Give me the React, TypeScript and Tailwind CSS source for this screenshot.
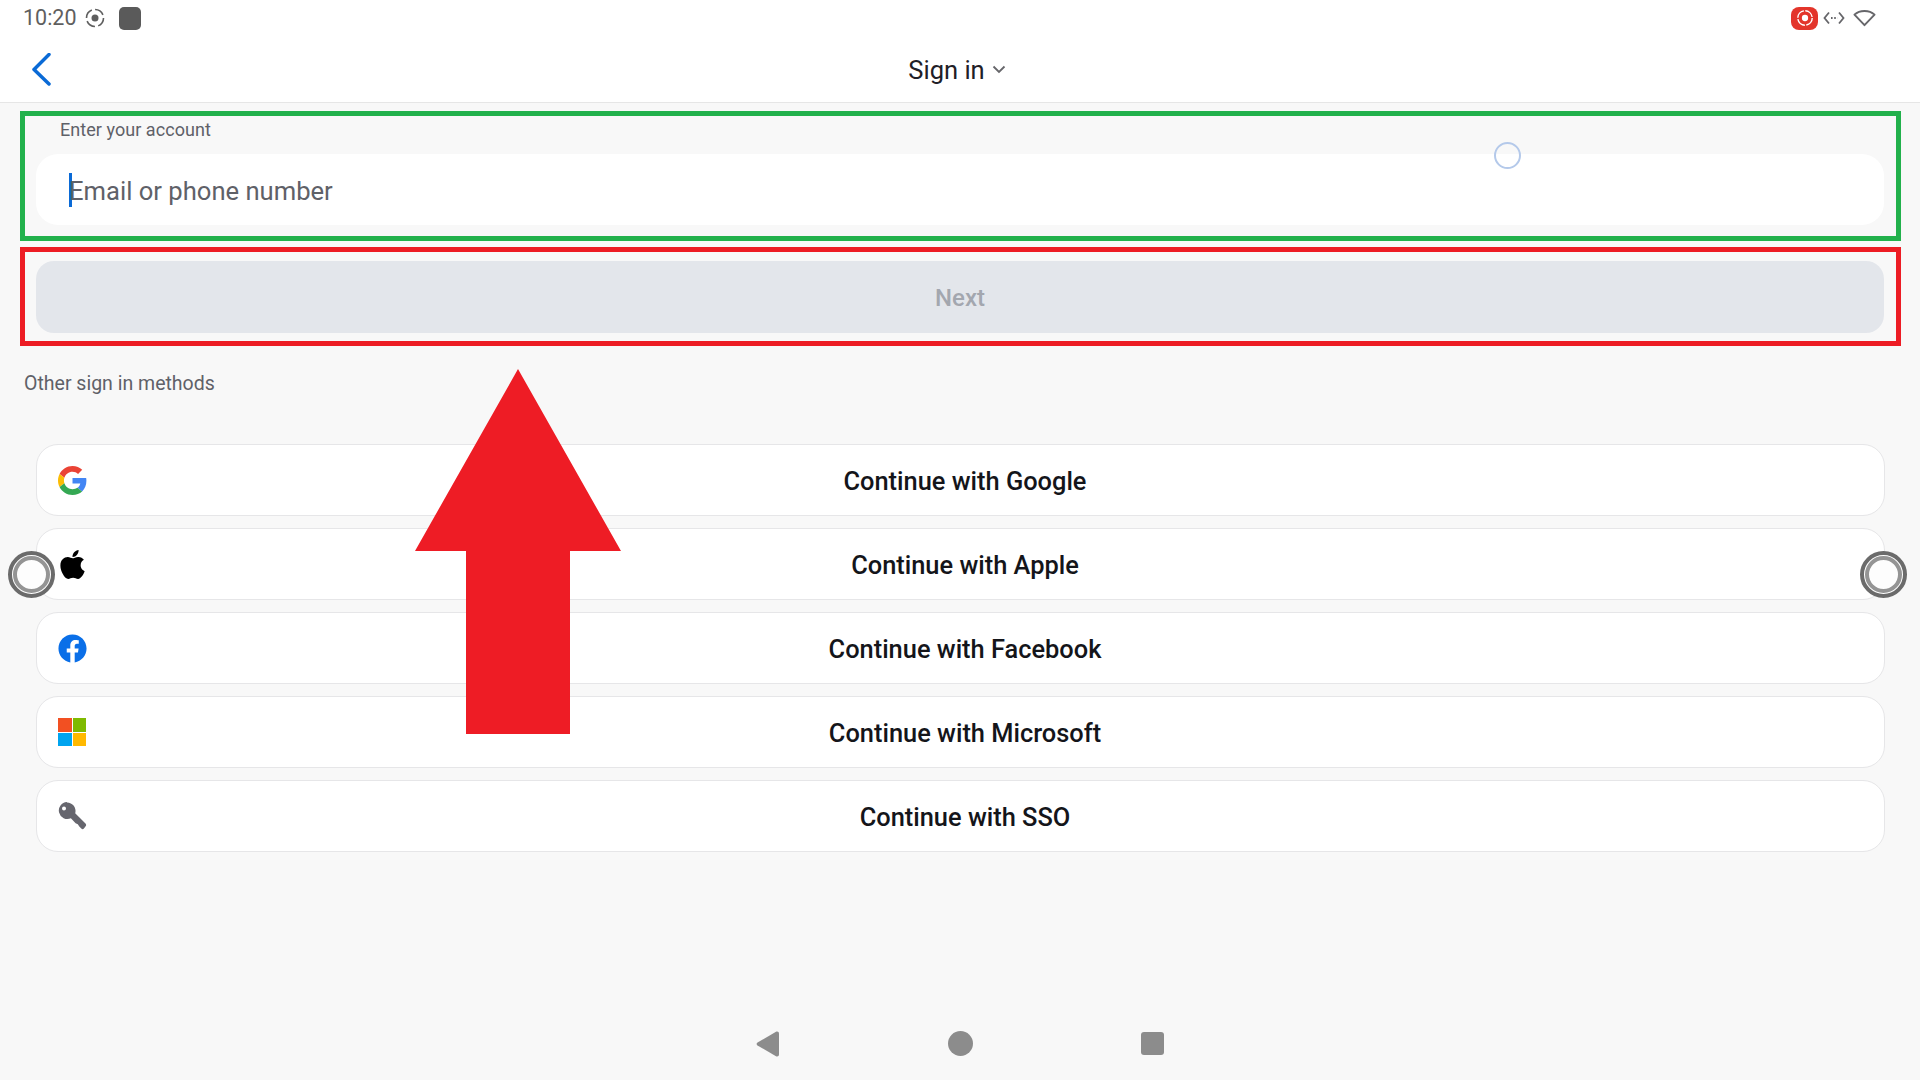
import React from "react";
import { FaApple, FaFacebook } from "react-icons/fa";

function GoogleIcon() {
  return (
    <svg viewBox="0 0 48 48" className="h-[29px] w-[29px]">
      <path fill="#EA4335" d="M24 9.5c3.5 0 6.7 1.2 9.2 3.6l6.9-6.9C35.9 2.4 30.5 0 24 0 14.6 0 6.5 5.4 2.6 13.2l8 6.2C12.500 13.600 17.800 9.500 24 9.500z" />
      <path fill="#4285F4" d="M47 24.500c0-1.600-.15-3.100-.4-4.500H24v9h12.900c-.6 3-2.200 5.500-4.700 7.200l7.700 6C44.400 38 47 31.800 47 24.500z" />
      <path fill="#FBBC05" d="M10.600 28.600c-.5-1.400-.8-3-.8-4.600s.3-3.200.8-4.600l-8-6.200C.9 16.500 0 20.100 0 24s.9 7.500 2.600 10.800l8-6.200z" />
      <path fill="#34A853" d="M24 48c6.500 0 11.900-2.100 15.900-5.800l-7.700-6c-2.200 1.400-4.900 2.300-8.200 2.300-6.200 0-11.500-4.100-13.400-9.900l-8 6.200C6.500 42.600 14.600 48 24 48z" />
    </svg>
  );
}

function MicrosoftIcon() {
  return (
    <div className="grid h-[28px] w-[28px] grid-cols-2 gap-[1px]">
      <div className="bg-[#f25022]" />
      <div className="bg-[#7fba00]" />
      <div className="bg-[#00a4ef]" />
      <div className="bg-[#ffb900]" />
    </div>
  );
}

function KeyIcon() {
  return (
    <svg viewBox="0 0 30 30" className="h-[30px] w-[30px]">
      <path
        fill="#66666e"
        fillRule="evenodd"
        d="M10 1.500a8.500 8.500 0 0 1 8.200 10.800l10.300 10.300a2 2 0 0 1 .3 2.400l-1.900 2.500a1.800 1.800 0 0 1-2.600.1l-2-2-1.500-2.400-2.200-1-4.700-5a8.500 8.500 0 1 1-4-16.200zM7 5.500a2 2 0 1 0 0 4 2 2 0 0 0 0-4z"
      />
    </svg>
  );
}

function Handle({ className }: { className: string }) {
  return (
    <div
      className={`absolute top-[551px] h-[47px] w-[47px] rounded-full border-[4px] border-[#6b6b6b] bg-white p-[1px] ${className}`}
    >
      <div className="h-full w-full rounded-full border-[4px] border-[#949494] bg-[#fdfdfd]" />
    </div>
  );
}

const methods = [
  { label: "Continue with Google", icon: <GoogleIcon /> },
  { label: "Continue with Apple", icon: <FaApple className="h-[33px] w-[33px] shrink-0 text-black" /> },
  { label: "Continue with Facebook", icon: <FaFacebook className="h-[29px] w-[29px] text-[#0a6fe8]" /> },
  { label: "Continue with Microsoft", icon: <MicrosoftIcon /> },
  { label: "Continue with SSO", icon: <KeyIcon /> },
];

export default function App() {
  return (
    <div className="relative flex h-[1080px] w-[1920px] flex-col overflow-hidden bg-[#f8f8f8] font-['Roboto',sans-serif]">
      {/* Status bar + title */}
      <header className="h-[103px] border-b border-[#e6e6e6] bg-white">
        <div className="flex h-[36px] items-center justify-between pl-[23px] pr-[44px]">
          <div className="flex items-center">
            <span className="text-[21.500px] leading-none text-[#5f5f5f]">10:20</span>
            <svg viewBox="0 0 20 20" className="ml-[8px] h-[20px] w-[20px]" fill="none" stroke="#5f5f5f">
              <circle cx="10" cy="10" r="8.500" strokeWidth="1.600" strokeDasharray="10 3.300" />
              <circle cx="10" cy="10" r="3.500" fill="#5f5f5f" stroke="none" />
            </svg>
            <div className="ml-[14px] h-[23px] w-[22px] rounded-[5px] bg-[#5a5a5a]" />
          </div>
          <div className="flex items-center">
            <div className="flex h-[23px] w-[27px] items-center justify-center rounded-[8px] bg-[#e3352b]">
              <svg viewBox="0 0 20 20" className="h-[18px] w-[18px]" fill="none" stroke="#fff">
                <circle cx="10" cy="10" r="8" strokeWidth="1.600" strokeDasharray="11 1.600" />
                <circle cx="10" cy="10" r="3.500" fill="#fff" stroke="none" />
              </svg>
            </div>
            <svg viewBox="0 0 22 14" className="ml-[5px] h-[14px] w-[22px]" fill="none" stroke="#66666a" strokeWidth="1.800">
              <path d="M6 1.500 1.500 7 6 12.500M16 1.500 20.500 7 16 12.500" />
              <path d="M8 7h6.500" strokeDasharray="1.600 1.600" />
            </svg>
            <svg viewBox="0 0 24 18" className="ml-[8px] h-[18px] w-[23px]" fill="none" stroke="#66666a" strokeWidth="2" strokeLinejoin="round">
              <path d="M1.500 5.500C7 .5 17 .5 22.500 5.500L12 16.500z" />
            </svg>
          </div>
        </div>
        <div className="relative flex h-[66px] items-center justify-center pr-[6px]">
          <svg viewBox="0 0 20 33" className="absolute left-[31px] top-[17px] h-[33px] w-[20px]" fill="none" stroke="#0a6ad6" strokeWidth="3.500" strokeLinecap="round" strokeLinejoin="round">
            <path d="M18 1.500 3 16.500 18 31" />
          </svg>
          <span className="pt-[4px] text-[25.500px] leading-none text-[#1f2027]">Sign in</span>
          <svg viewBox="0 0 14 10" className="ml-[7px] mt-[1px] h-[10px] w-[14px]" fill="none" stroke="#66666a" strokeWidth="1.800">
            <path d="m1.500 1.500 5.500 5.500 5.500-5.500" />
          </svg>
        </div>
      </header>

      {/* Account field, annotated in green */}
      <section className="ml-[20px] mt-[8px] h-[130px] w-[1881px] border-[5px] border-[#22b14c]">
        <p className="ml-[35px] mt-[4px] h-[30px] text-[18px] leading-[20px] tracking-[0.05px] text-[#5f6168]">Enter your account</p>
        <div className="ml-[11px] mt-[4px] flex h-[71px] w-[1848px] items-center rounded-[22px] bg-white pl-[33px]">
          <div className="h-[34px] w-[3px] bg-[#0a6ad6]" />
          <span className="-ml-[3px] pt-[4px] text-[25.600px] leading-none text-[#5f6168]">Email or phone number</span>
        </div>
      </section>

      {/* Next, annotated in red */}
      <section className="ml-[20px] mt-[6px] h-[99px] w-[1881px] border-[5px] border-[#ed1c24] pl-[11px] pt-[9px]">
        <button className="flex h-[72px] w-[1848px] items-center justify-center rounded-[18px] bg-[#e3e6eb] pt-[2px] text-[24px] font-medium leading-none text-[#a3a7af]">
          Next
        </button>
      </section>

      <p className="ml-[24px] mt-[27px] h-[22px] text-[19.500px] leading-[22px] text-[#5f6168]">Other sign in methods</p>

      <div className="ml-[36px] mt-[49px] flex w-[1849px] flex-col gap-[12px]">
        {methods.map((m) => (
          <div
            key={m.label}
            className="relative flex h-[72px] items-center justify-center rounded-[22px] border border-[#e6e6e8] bg-white pt-[4px] text-[25.400px] font-medium leading-none text-[#14151a]"
          >
            <span className="absolute left-[20px] top-[20px] flex h-[30px] w-[30px] items-center justify-center">{m.icon}</span>
            <span className="pl-[9px]">{m.label}</span>
          </div>
        ))}
      </div>

      {/* Navigation bar */}
      <div className="mt-auto flex h-[72px] items-start justify-center gap-[168px] pt-[23px]">
        <svg viewBox="0 0 24 26" className="h-[26px] w-[24px]">
          <path fill="#8c8c8c" d="M1.500 11.500 20 .8C21.500 0 23 .8 23 2.500v21c0 1.700-1.500 2.500-3 1.700L1.500 14.500c-1.200-.7-1.200-2.300 0-3z" />
        </svg>
        <div className="h-[25px] w-[25px] rounded-full bg-[#8c8c8c]" />
        <div className="mt-[1px] h-[23px] w-[23px] rounded-[3px] bg-[#8c8c8c]" />
      </div>

      {/* Overlays */}
      <div className="absolute left-[1494px] top-[142px] h-[27px] w-[27px] rounded-full border-2 border-[#b4c9ea]" />
      <Handle className="left-[8px]" />
      <Handle className="left-[1860px]" />
      <svg viewBox="0 0 206 365" className="absolute left-[415px] top-[369px] h-[365px] w-[206px]">
        <path fill="#ee1c25" d="M103 0 206 182H155V365H51V182H0z" />
      </svg>
    </div>
  );
}
